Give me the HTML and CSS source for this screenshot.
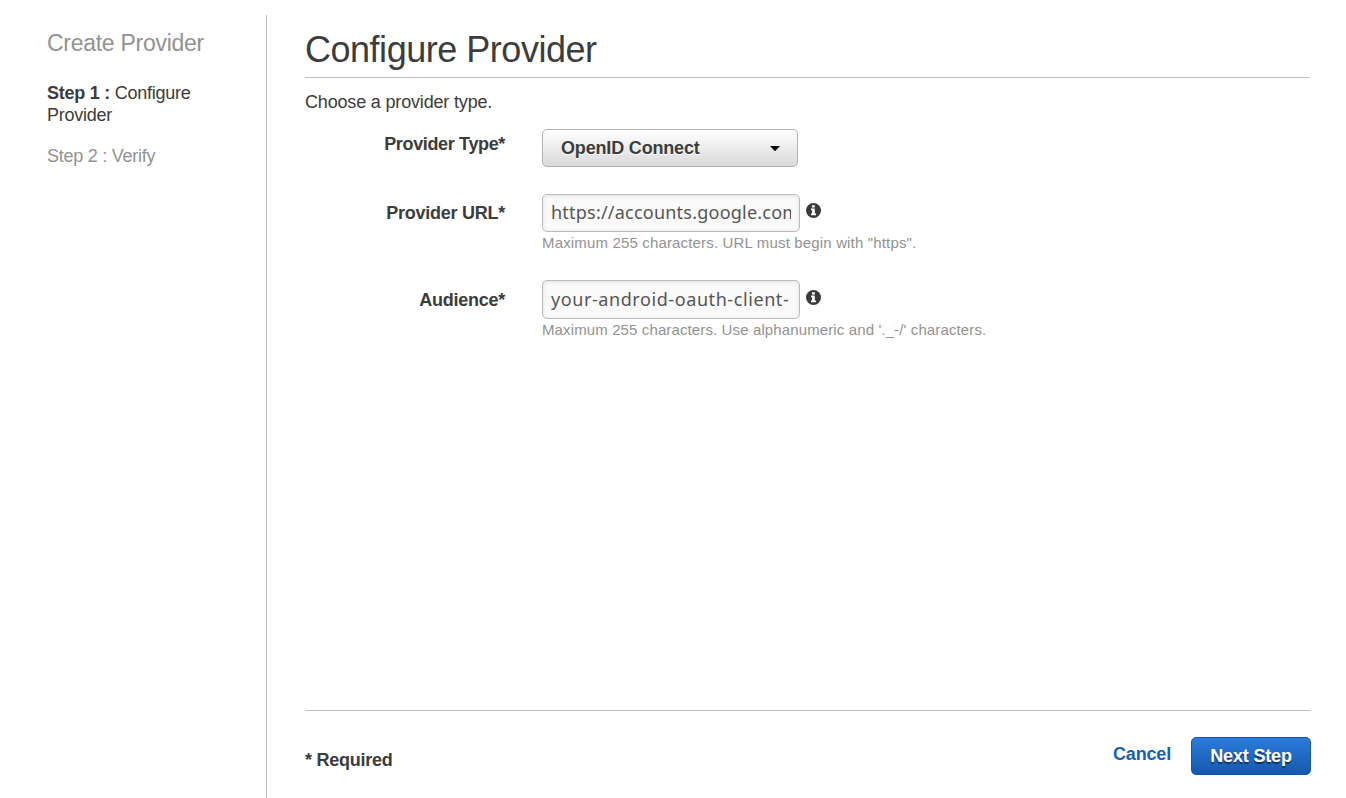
FILE: index.html
```html
<!DOCTYPE html>
<html lang="en">
<head>
<meta charset="utf-8">
<title>Configure Provider</title>
<link rel="stylesheet" href="styles.css">
</head>
<body>
<div class="wizard">
  <aside class="sidebar">
    <h2 class="sidebar-title">Create Provider</h2>
    <p class="step step-active"><b>Step 1 :</b> Configure<br>Provider</p>
    <p class="step">Step 2 : Verify</p>
  </aside>
  <main class="content">
    <h1 class="title"><span>Configure Provider</span></h1>
    <p class="intro">Choose a provider type.</p>
    <form class="form">
      <div class="row row-type">
        <label class="label label-type">Provider Type*</label>
        <button type="button" class="dropdown"><span class="dropdown-text">OpenID Connect</span><svg class="caret" width="10" height="5" viewBox="0 0 10 5"><path d="M0 0H10L5.8 4.6Q5 5.3 4.2 4.6Z"/></svg></button>
      </div>
      <div class="row row-url">
        <label class="label label-url">Provider URL*</label>
        <div class="field">
          <div class="control">
            <input class="input input-url" type="text" value="https://accounts.google.com">
            <svg class="info" width="15" height="15" viewBox="0 0 15 15"><circle cx="7.5" cy="7.5" r="7.5" fill="#3a3a3a"/><path fill="#fff" d="M6 2.2h2.8v2.2H6zM5 5.6h3.8v5h1.2v1.7H5v-1.7h1.1V7.3H5z"/></svg>
          </div>
          <p class="help help-url">Maximum 255 characters. URL must begin with "https".</p>
        </div>
      </div>
      <div class="row">
        <label class="label label-audience">Audience*</label>
        <div class="field">
          <div class="control">
            <input class="input input-audience" type="text" value="your-android-oauth-client-">
            <svg class="info info-audience" width="15" height="15" viewBox="0 0 15 15"><circle cx="7.5" cy="7.5" r="7.5" fill="#3a3a3a"/><path fill="#fff" d="M6 2.2h2.8v2.2H6zM5 5.6h3.8v5h1.2v1.7H5v-1.7h1.1V7.3H5z"/></svg>
          </div>
          <p class="help">Maximum 255 characters. Use alphanumeric and '._-/' characters.</p>
        </div>
      </div>
    </form>
    <footer class="footer">
      <span class="required">* Required</span>
      <div class="actions">
        <a class="cancel">Cancel</a>
        <button type="button" class="next">Next Step</button>
      </div>
    </footer>
  </main>
</div>
</body>
</html>
```

FILE: styles.css
```css
* { box-sizing: border-box; }
body {
  margin: 0;
  background: #fff;
  color: #3c3c3c;
  font-family: "Liberation Sans", Arial, sans-serif;
  font-size: 18px;
  line-height: 22px;
  letter-spacing: -0.17px;
}
h1, h2, p { margin: 0; font-weight: normal; }
.wizard { display: flex; height: 798px; padding-top: 15px; overflow: hidden; }
.sidebar { width: 267px; padding: 14px 0 0 47px; border-right: 1px solid #bfbfbf; }
.sidebar-title { font-size: 23px; line-height: 28px; letter-spacing: -0.28px; color: #929292; }
.step { margin-top: 19px; color: #929292; letter-spacing: -0.25px; }
.step-active { margin-top: 25px; color: #3c3c3c; }
.content { flex: 1; display: flex; flex-direction: column; padding: 0 35px 0 38px; }
.title {
  height: 63px;
  margin-right: 1px;
  padding-top: 15px;
  border-bottom: 1px solid #bfbfbf;
  font-size: 36px;
  line-height: 40px;
  letter-spacing: -0.48px;
}
.intro { margin-top: 13px; }
.form { flex: 1; padding-top: 16px; }
.row { display: flex; }
.row-type { height: 65px; }
.row-url { height: 86px; }
.label {
  width: 200px;
  margin-right: 37px;
  padding-top: 4px;
  text-align: right;
  font-weight: bold;
  letter-spacing: -0.25px;
}
.label-type { letter-spacing: -0.35px; }
.label-url { padding-top: 8px; }
.label-audience { padding-top: 9px; }
.dropdown {
  display: flex;
  align-items: center;
  justify-content: space-between;
  width: 256px;
  height: 38px;
  padding: 0 17px 0 18px;
  border: 1px solid #b3b3b3;
  border-radius: 5px;
  background: linear-gradient(#fff, #d9d9d9);
  color: #3c3c3c;
  font: bold 18px "Liberation Sans", Arial, sans-serif;
  letter-spacing: -0.17px;
  text-shadow: 0 1px 0 #fff;
}
.control { display: flex; }
.input {
  width: 258px;
  height: 38px;
  padding: 0 8px 2px;
  border: 1px solid #bbb;
  border-radius: 5px;
  background: #fafafa;
  box-shadow: inset 0 1px 4px rgba(0, 0, 0, .1);
  color: #555;
  font: 18px "Noto Sans", sans-serif;
  letter-spacing: 0.22px;
}
.input-audience { height: 39px; letter-spacing: 0.58px; }
.info { margin: 9px 0 0 6px; }
.info-audience { margin-top: 10px; }
.help { margin-top: 1px; font-size: 15px; line-height: 20px; letter-spacing: 0.12px; color: #929292; }
.help-url { letter-spacing: 0.16px; }
.footer {
  display: flex;
  justify-content: space-between;
  height: 88px;
  border-top: 1px solid #bfbfbf;
}
.required { padding-top: 38px; font-weight: bold; letter-spacing: -0.25px; }
.actions { display: flex; gap: 20px; padding-top: 26px; }
.cancel { padding-top: 6px; color: #1660b0; font-weight: bold; }
.next {
  width: 120px;
  height: 38px;
  padding: 0;
  border: 1px solid #1156a8;
  border-radius: 5px;
  background: linear-gradient(#2d7bdb, #1459ac);
  color: #fff;
  font: bold 18px "Liberation Sans", Arial, sans-serif;
  letter-spacing: -0.17px;
  text-shadow: 0 2px 1px rgba(0, 0, 0, .5);
}
```
